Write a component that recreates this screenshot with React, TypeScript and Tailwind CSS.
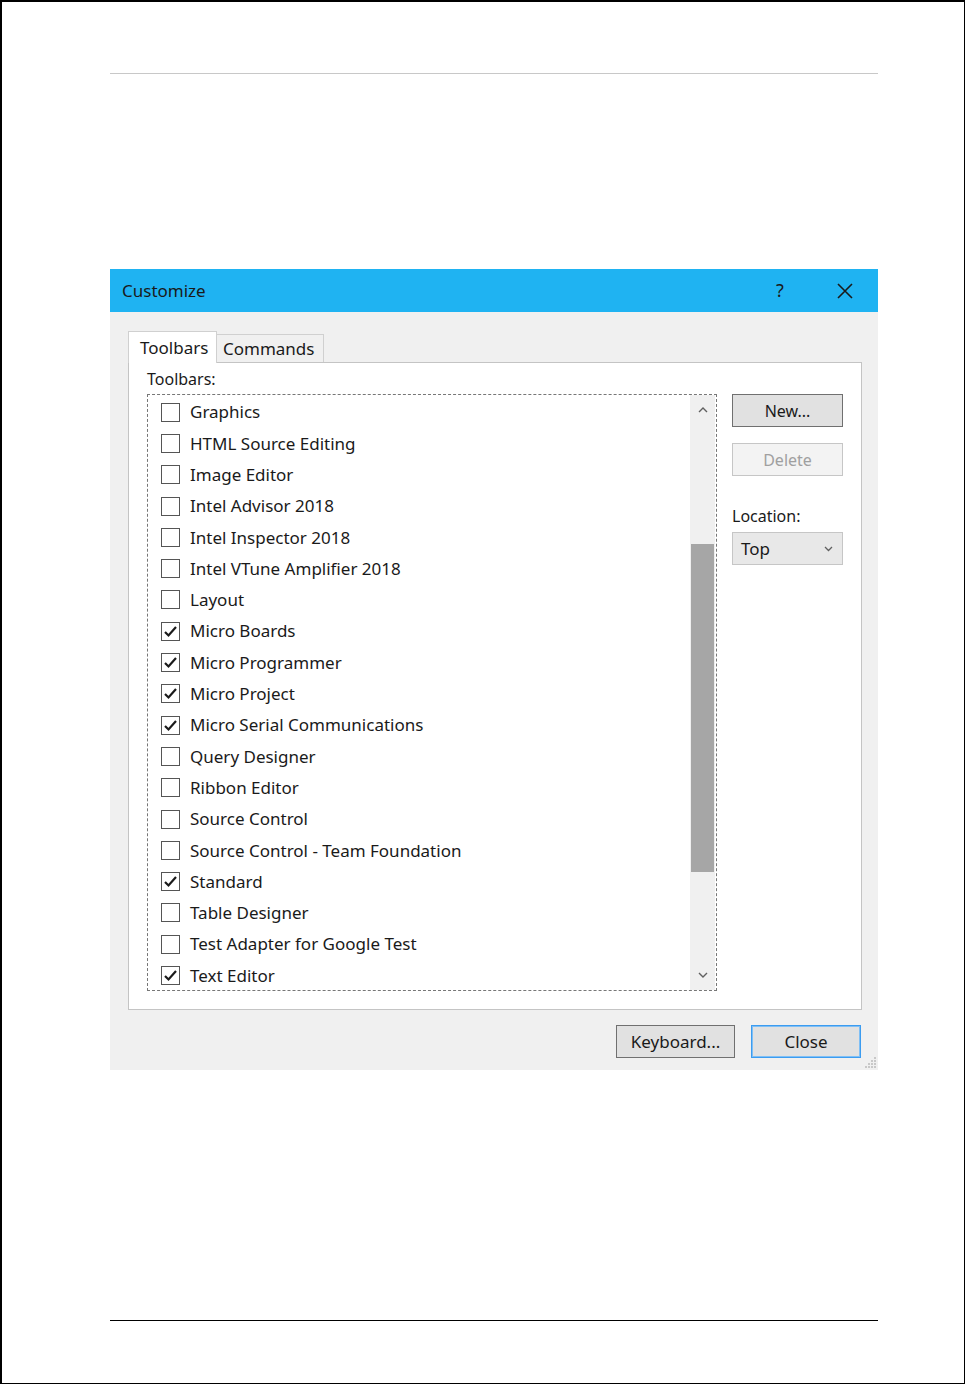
import React from "react";

const items: [string, boolean][] = [
  ["Graphics", false],
  ["HTML Source Editing", false],
  ["Image Editor", false],
  ["Intel Advisor 2018", false],
  ["Intel Inspector 2018", false],
  ["Intel VTune Amplifier 2018", false],
  ["Layout", false],
  ["Micro Boards", true],
  ["Micro Programmer", true],
  ["Micro Project", true],
  ["Micro Serial Communications", true],
  ["Query Designer", false],
  ["Ribbon Editor", false],
  ["Source Control", false],
  ["Source Control - Team Foundation", false],
  ["Standard", true],
  ["Table Designer", false],
  ["Test Adapter for Google Test", false],
  ["Text Editor", true],
];

function Check({ on }: { on: boolean }) {
  return (
    <div className="w-[19px] h-[19px] border border-[#555] bg-white flex items-center justify-center shrink-0">
      {on && (
        <svg width="15" height="13" viewBox="0 0 15 13">
          <path d="M2 7 L5.5 10.5 L13 2" fill="none" stroke="#1a1a1a" strokeWidth="2.2" />
        </svg>
      )}
    </div>
  );
}

export default function App() {
  const font = { fontFamily: '"Noto Sans", "Open Sans", sans-serif' };
  const grip = [
    [9, 0],
    [6, 3], [9, 3],
    [3, 6], [6, 6], [9, 6],
    [0, 9], [3, 9], [6, 9], [9, 9],
  ];
  return (
    <div
      className="w-[965px] h-[1384px] bg-white border-t-2 border-l-2 border-r-[1.5px] border-b-[1.5px] border-black flex flex-col"
      style={font}
    >
      <div className="mt-[71px] ml-[108px] w-[768px] h-px bg-[#c8c8c8]" />
      <div className="mt-[195px] ml-[108px] w-[768px] h-[801px] bg-[#f0f0f0] flex flex-col relative">
        {/* title bar */}
        <div className="h-[43px] bg-[#1fb3f2] flex items-center pl-[12px] text-[#1a1a1a] text-[17px]">
          <span className="flex-1">Customize</span>
          <span className="w-[20px] text-center text-[18px] mr-[47px]">?</span>
          <svg width="16" height="16" viewBox="0 0 16 16" className="mr-[25px]">
            <path d="M1 1 L15 15 M15 1 L1 15" stroke="#1a1a1a" strokeWidth="1.6" />
          </svg>
        </div>
        {/* body */}
        <div className="flex-1 flex flex-col pt-[19px] pl-[18px] pr-[16px] pb-[12px]">
          <div className="flex items-end h-[31px]">
            <div className="w-[89px] h-[32px] bg-white border border-b-0 border-[#d0d0d0] text-[17px] text-[#1a1a1a] pl-[11px] pt-[3px] relative z-10 -mb-px">
              Toolbars
            </div>
            <div className="w-[107px] h-[28px] bg-[#f0f0f0] border border-l-0 border-b-0 border-[#d0d0d0] text-[17px] text-[#1a1a1a] pl-[6px] pt-[1px]">
              Commands
            </div>
          </div>
          <div className="h-[648px] bg-white border border-[#c4c4c4] pt-[6px] pl-[18px] pr-[18px] flex flex-col">
            <div className="text-[16px] text-[#1a1a1a] leading-[20px] h-[25px]">Toolbars:</div>
            <div className="flex gap-[15px]">
              <div className="w-[570px] h-[597px] border border-dashed border-[#777] flex">
                <div className="flex-1 pt-[1.5px] pl-[13px]">
                  {items.map(([label, on]) => (
                    <div key={label} className="h-[31.3px] flex items-center gap-[10px]">
                      <Check on={on} />
                      <span className="text-[17px] text-[#1a1a1a] whitespace-nowrap">{label}</span>
                    </div>
                  ))}
                </div>
                <div className="w-[25px] bg-[#f0f0f0] mr-[1px] flex flex-col items-center">
                  <div className="h-[30px] flex items-center justify-center">
                    <svg width="10" height="6" viewBox="0 0 10 6">
                      <path d="M1 5 L5 1 L9 5" fill="none" stroke="#606060" strokeWidth="1.4" />
                    </svg>
                  </div>
                  <div className="h-[119px]" />
                  <div className="w-[23px] h-[328px] bg-[#a6a6a6]" />
                  <div className="flex-1" />
                  <div className="h-[30px] flex items-center justify-center">
                    <svg width="10" height="6" viewBox="0 0 10 6">
                      <path d="M1 1 L5 5 L9 1" fill="none" stroke="#606060" strokeWidth="1.4" />
                    </svg>
                  </div>
                </div>
              </div>
              <div className="w-[111px] flex flex-col">
                <div className="h-[33px] bg-[#e1e1e1] border border-[#707070] flex items-center justify-center text-[16px] text-[#1a1a1a]">
                  New...
                </div>
                <div className="mt-[16px] h-[33px] bg-[#f3f3f3] border border-[#c6c6c6] flex items-center justify-center text-[16px] text-[#a0a0a0]">
                  Delete
                </div>
                <div className="mt-[29px] text-[16px] text-[#1a1a1a] h-[27px] leading-[22px]">Location:</div>
                <div className="h-[33px] bg-[#e8e8e8] border border-[#c6c6c6] flex items-center pl-[8px] pr-[9px] text-[17px] text-[#1a1a1a]">
                  <span className="flex-1">Top</span>
                  <svg width="9" height="6" viewBox="0 0 9 6">
                    <path d="M1 1 L4.5 4.5 L8 1" fill="none" stroke="#606060" strokeWidth="1.3" />
                  </svg>
                </div>
              </div>
            </div>
          </div>
          <div className="flex justify-end gap-[16px] mt-[15px] pr-px">
            <div className="w-[119px] h-[33px] bg-[#e1e1e1] border border-[#707070] flex items-center justify-center text-[17px] text-[#1a1a1a]">
              Keyboard...
            </div>
            <div className="w-[110px] h-[33px] bg-[#e1e1e1] border border-[#3c9cf0] ring-1 ring-inset ring-[#7fbff5] flex items-center justify-center text-[17px] text-[#1a1a1a]">
              Close
            </div>
          </div>
        </div>
        <svg width="12" height="12" viewBox="0 0 12 12" className="absolute right-[1px] bottom-[1px]">
          {grip.map(([x, y]) => (
            <rect key={`${x}-${y}`} x={x} y={y} width="2" height="2" fill="#c8c8c8" />
          ))}
        </svg>
      </div>
      <div className="mt-[250px] ml-[108px] w-[768px] h-px bg-black" />
    </div>
  );
}
